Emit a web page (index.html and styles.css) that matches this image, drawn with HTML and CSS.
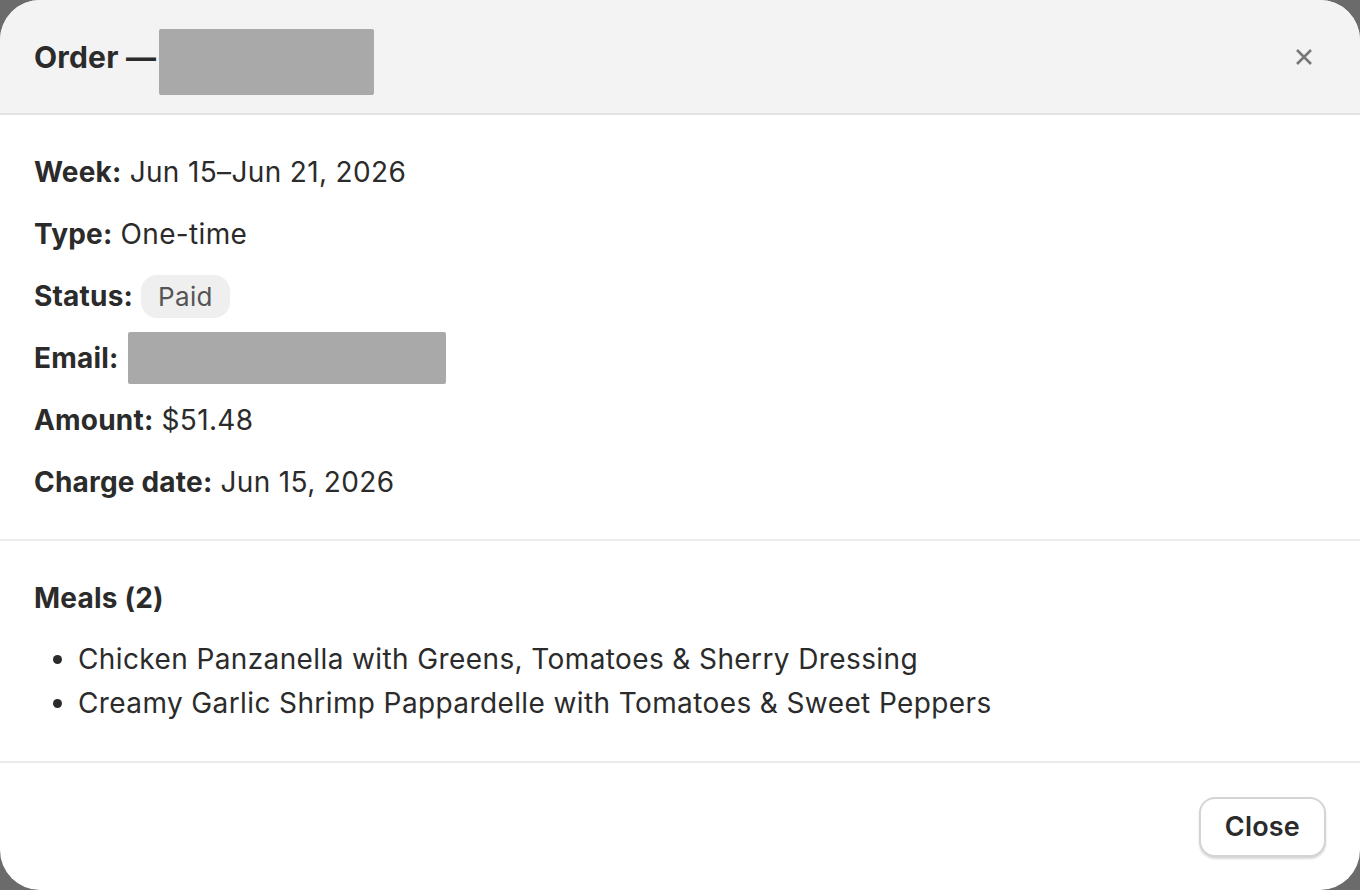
FILE: index.html
```html
<!DOCTYPE html>
<html lang="en">
<head>
    <meta charset="UTF-8">
    <meta name="viewport" content="width=device-width, initial-scale=1.0">
    <title>Order details</title>
    <link rel="stylesheet" href="styles.css">
</head>
<body>
    <div class="modal">
        <!-- header -->
        <div class="modal-header">
            <h2 class="modal-title">Order — <span class="redacted redacted-id"></span></h2>
            <button class="icon-close" aria-label="Close">
                <svg width="20" height="20" viewBox="0 0 20 20">
                    <path d="M3 3 L17 17 M17 3 L3 17" stroke="#777" stroke-width="2.6" stroke-linecap="butt" fill="none"/>
                </svg>
            </button>
        </div>

        <!-- order info -->
        <div class="section info">
            <p><b>Week:</b> Jun 15–Jun 21, 2026</p>
            <p><b>Type:</b> One-time</p>
            <p><b>Status:</b> <span class="badge">Paid</span></p>
            <p><b>Email:</b> <span class="redacted redacted-email"></span></p>
            <p><b>Amount:</b> $51.48</p>
            <p><b>Charge date:</b> Jun 15, 2026</p>
        </div>

        <!-- meals -->
        <div class="section meals">
            <h3>Meals (2)</h3>
            <ul>
                <li>Chicken Panzanella with Greens, Tomatoes &amp; Sherry Dressing</li>
                <li>Creamy Garlic Shrimp Pappardelle with Tomatoes &amp; Sweet Peppers</li>
            </ul>
        </div>

        <div class="modal-footer">
            <button class="btn">Close</button>
        </div>
    </div>
</body>
</html>
```

FILE: styles.css
```css
html, body {
    margin: 0;
    height: 100%;
}
body {
    background: #6b6b6b;
    font-family: Inter, "Noto Sans", sans-serif;
    color: #2b2b2b;
}
.modal {
    width: 1360px;
    height: 890px;
    background: #fff;
    border-radius: 40px;
    overflow: hidden;
    display: flex;
    flex-direction: column;
}
.modal-header {
    height: 113px;
    flex-shrink: 0;
    background: #f3f3f3;
    border-bottom: 2px solid #e3e3e3;
    display: flex;
    align-items: center;
    justify-content: space-between;
    padding: 0 36px 0 34px;
}
.modal-title {
    margin: 0;
    font-size: 30px;
    font-weight: 700;
    letter-spacing: 0.2px;
    display: flex;
    align-items: center;
    gap: 3px;
}
.icon-close {
    background: none;
    border: none;
    padding: 10px;
    cursor: pointer;
    display: flex;
}
.redacted {
    display: inline-block;
    background: #a9a9a9;
    border-radius: 2px;
}
.redacted-id {
    width: 215px;
    height: 66px;
    margin-top: 10px;
}
.redacted-email {
    width: 318px;
    height: 52px;
    margin-left: 1px;
}

.section {
    padding: 0 34px;
    border-bottom: 2px solid #ebebeb;
}
.info {
    padding-top: 26px;
    padding-bottom: 26px;
}
.info p {
    margin: 0;
    height: 62px;
    display: flex;
    align-items: center;
    gap: 8px;
    font-size: 28px;
    letter-spacing: 0.35px;
}
.info b {
    font-weight: 700;
    letter-spacing: 0.2px;
}
.badge {
    background: #efefef;
    color: #555;
    font-size: 26px;
    letter-spacing: 0.3px;
    padding: 0 17px;
    height: 43px;
    line-height: 43px;
    border-radius: 16px;
}

.meals {
    padding-top: 37px;
    padding-bottom: 36px;
}
.meals h3 {
    margin: 0 0 19px;
    font-size: 28px;
    line-height: 40px;
    font-weight: 700;
    letter-spacing: 0.2px;
}
.meals ul {
    margin: 0;
    padding-left: 44px;
}
.meals li {
    font-size: 28px;
    line-height: 44px;
    letter-spacing: 0.39px;
}

.modal-footer {
    flex: 1;
    display: flex;
    justify-content: flex-end;
    align-items: center;
    padding: 0 34px;
}
.btn {
    font-family: inherit;
    font-size: 27px;
    font-weight: 600;
    letter-spacing: 0.2px;
    color: #2b2b2b;
    background: #fff;
    border: 2px solid #d4d4d4;
    border-radius: 16px;
    box-shadow: 0 2px 2px rgba(0, 0, 0, 0.15);
    height: 60px;
    padding: 0 24px;
    cursor: pointer;
}
```
